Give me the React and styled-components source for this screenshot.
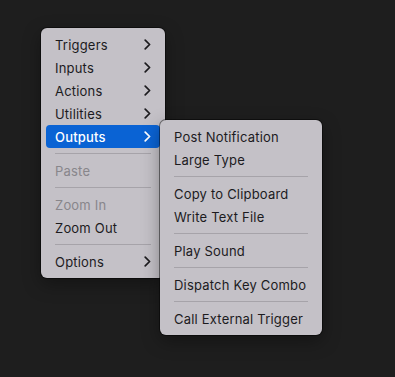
import React from 'react';
import styled, { createGlobalStyle } from 'styled-components';

const GlobalStyle = createGlobalStyle`
  html, body {
    margin: 0;
    padding: 0;
    background: #1e1e1e;
    width: 395px;
    height: 377px;
    overflow: hidden;
  }
`;

const mainItems = [
  { label: 'Triggers', sub: true },
  { label: 'Inputs', sub: true },
  { label: 'Actions', sub: true },
  { label: 'Utilities', sub: true },
  { label: 'Outputs', sub: true, active: true },
  { sep: true },
  { label: 'Paste', disabled: true },
  { sep: true },
  { label: 'Zoom In', disabled: true },
  { label: 'Zoom Out' },
  { sep: true },
  { label: 'Options', sub: true },
];

const subItems = [
  { label: 'Post Notification' },
  { label: 'Large Type' },
  { sep: true },
  { label: 'Copy to Clipboard' },
  { label: 'Write Text File' },
  { sep: true },
  { label: 'Play Sound' },
  { sep: true },
  { label: 'Dispatch Key Combo' },
  { sep: true },
  { label: 'Call External Trigger' },
];

const Chevron = () => (
  <svg width="7" height="11" viewBox="0 0 7 11">
    <polyline
      points="1.2,1.2 5.6,5.5 1.2,9.8"
      fill="none"
      stroke="currentColor"
      strokeWidth="1.7"
      strokeLinecap="round"
      strokeLinejoin="round"
    />
  </svg>
);

const MenuList = ({ items }) =>
  items.map((it, i) =>
    it.sep ? (
      <Separator key={i} />
    ) : (
      <Item key={i} $active={it.active} $disabled={it.disabled}>
        <Label>{it.label}</Label>
        {it.sub && <Chevron />}
      </Item>
    )
  );

const App = () => {
  return (
    <>
      <GlobalStyle />
      <Page>
        <MainMenu>
          <MenuList items={mainItems} />
          <SubMenu>
            <MenuList items={subItems} />
          </SubMenu>
        </MainMenu>
      </Page>
    </>
  );
};

export default App;

const Page = styled.div`
  padding: 28px 0 0 41px;
  font-family: Inter, 'Liberation Sans', sans-serif;
  font-size: 13px;
  -webkit-font-smoothing: antialiased;
`;

const Panel = styled.div`
  background: #c4c1c7;
  border-radius: 6px;
  padding: 5px 0;
  box-shadow: 0 0 0 1px rgba(0, 0, 0, 0.45), 0 6px 18px rgba(0, 0, 0, 0.35);
  display: flex;
  flex-direction: column;
  box-sizing: border-box;
`;

const MainMenu = styled(Panel)`
  position: relative;
  width: 124px;
`;

const SubMenu = styled(Panel)`
  position: absolute;
  left: 119px;
  top: 92px;
  width: 162px;
`;

const Item = styled.div`
  height: 23px;
  margin: 0 5px;
  padding: 0 9px;
  border-radius: 4px;
  display: flex;
  align-items: center;
  justify-content: space-between;
  color: ${({ $active, $disabled }) =>
    $active ? '#ffffff' : $disabled ? '#88868b' : '#1c1b1e'};
  background: ${({ $active }) => ($active ? '#0a63d4' : 'transparent')};
  font-weight: ${({ $active }) => ($active ? 500 : 400)};

  & svg {
    flex-shrink: 0;
  }
`;

const Label = styled.span`
  white-space: nowrap;
  letter-spacing: 0.2px;
`;

const Separator = styled.div`
  height: 1px;
  margin: 5px 14px;
  background: #a6a3a9;
`;
